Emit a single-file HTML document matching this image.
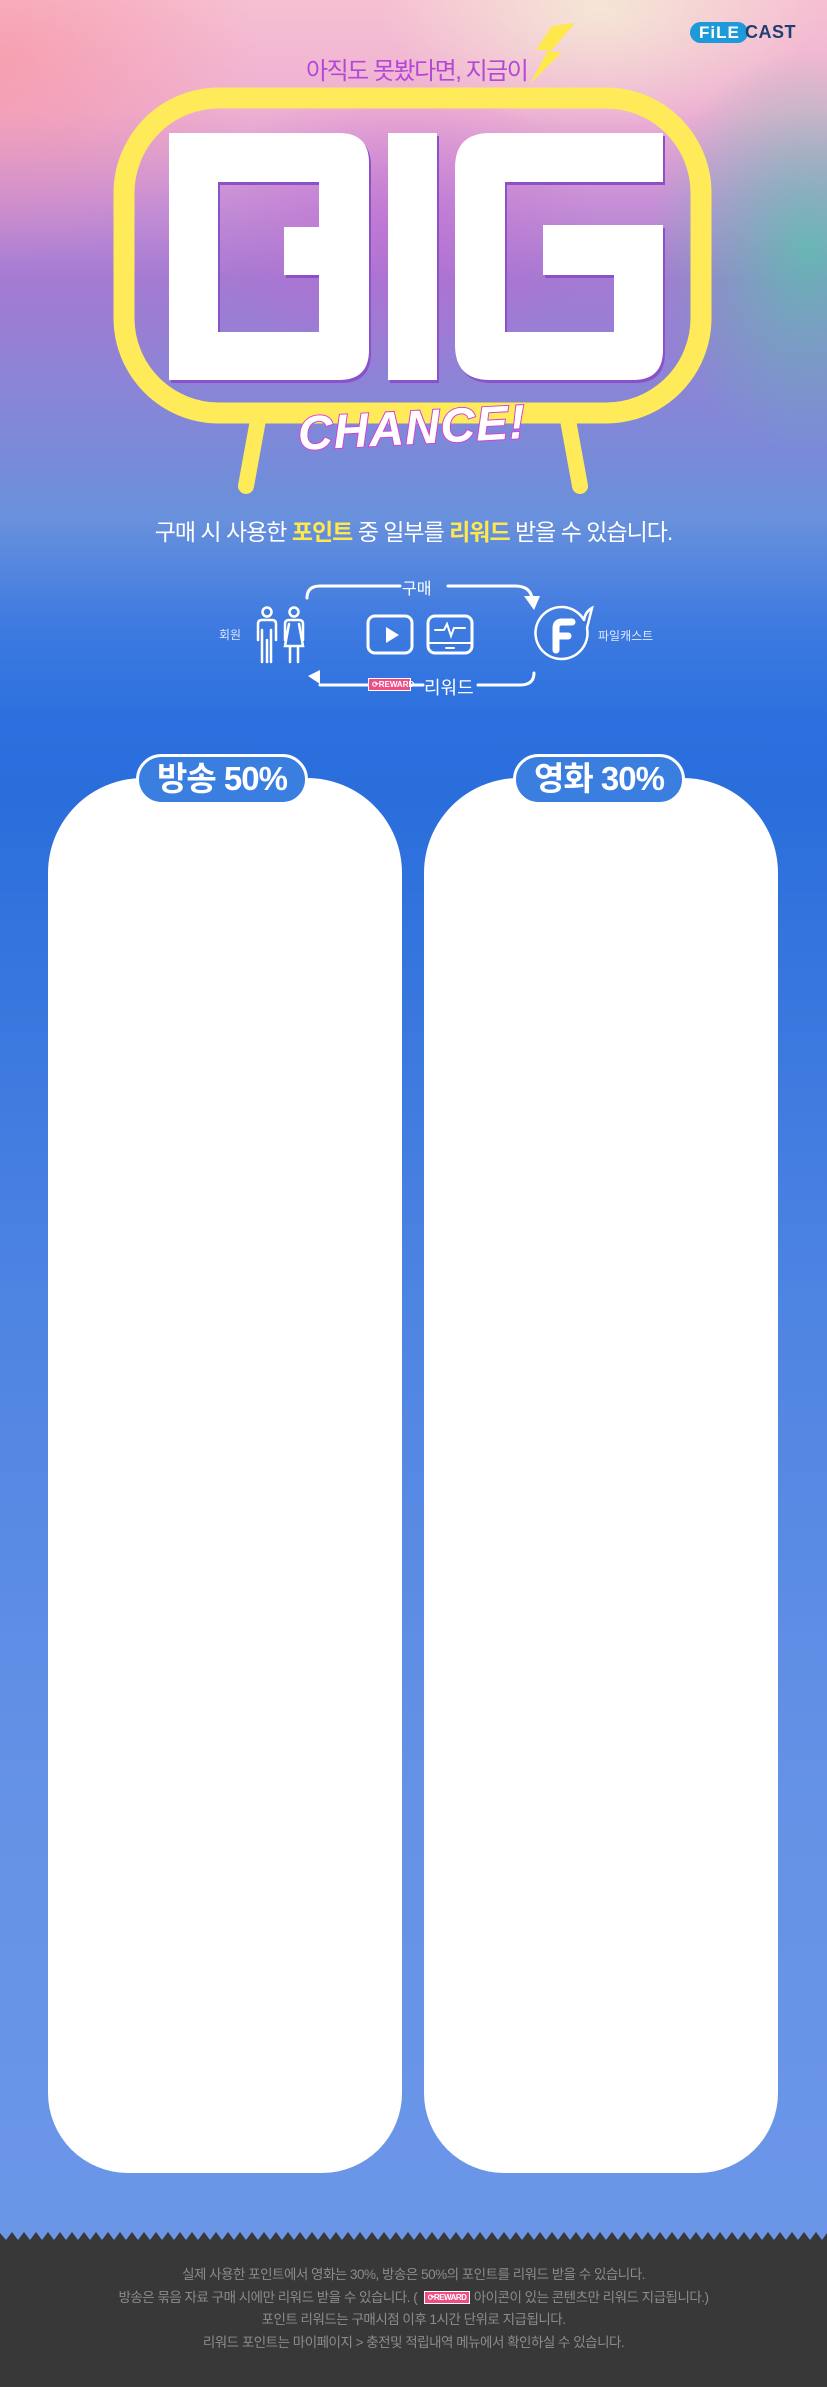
<!DOCTYPE html>
<html><head><meta charset="utf-8">
<style>
*{margin:0;padding:0;box-sizing:border-box}
body{width:827px;height:2390px;position:relative;overflow:hidden;font-family:"Liberation Sans","Noto Sans CJK KR",sans-serif;background:#fff}
#bg{position:absolute;left:0;top:0;width:827px;height:2240px;
background:
radial-gradient(ellipse 160px 200px at 810px 250px,rgba(80,200,170,.75),rgba(80,200,170,0)),
radial-gradient(ellipse 260px 200px at 0px 60px,rgba(250,140,150,.55),rgba(250,140,150,0)),
radial-gradient(ellipse 220px 120px at 600px 10px,rgba(245,240,215,.8),rgba(245,240,215,0)),
radial-gradient(ellipse 200px 150px at 400px 230px,rgba(190,100,210,.5),rgba(190,100,210,0)),
linear-gradient(180deg,#f6c0d2 0px,#eeb0d2 110px,#c890d6 200px,#a47ad2 280px,#8c84d6 380px,#7a8ad8 450px,#6890dc 520px,#3f7be0 620px,#2b70de 720px,#2a6edc 800px,#4e84e2 1300px,#6592e6 1800px,#6b96e8 2240px);}
.abs{position:absolute}
#foot{position:absolute;left:0;top:2240px;width:827px;height:147px;background:#383838;color:#8c8c8c;font-size:13.5px;text-align:center;padding-top:24px;line-height:22.5px;letter-spacing:-0.5px}
.card{position:absolute;top:778px;width:354px;height:1395px;background:#fff;border-radius:95px 95px 80px 80px}
.pill{position:absolute;top:754px;width:172px;height:51px;background:#3a7ee0;border:3px solid #fff;border-radius:26px;color:#fff;font-weight:bold;font-size:33px;text-align:center;line-height:44px;letter-spacing:-1px}
.rw{display:inline-block;background:#ee4d86;border:1px solid #fff;color:#fff;font-size:8px;font-weight:bold;line-height:11px;padding:0 3px;vertical-align:middle}
</style></head><body>
<div id="bg"></div>

<div class="abs" style="left:690px;top:22px;width:58px;height:21px;background:#1f9ad8;border-radius:11px;color:#fff;font-weight:bold;font-size:17px;line-height:21px;padding-left:9px;letter-spacing:1px">FiLE</div>
<div class="abs" style="left:745px;top:21px;color:#1e3f73;font-weight:bold;font-size:18px;line-height:22px;letter-spacing:.5px">CAST</div>

<div class="abs" style="left:306px;top:51px;color:#b446d8;font-size:24px;letter-spacing:-1.5px;white-space:nowrap">아직도 못봤다면, 지금이</div>
<svg class="abs" style="left:0;top:0" width="827" height="500">
<polygon points="575,23 550,52 562,52 530,84 548,50 536,50 552,26" fill="#ffe84c"/>
<line x1="258" y1="420" x2="246" y2="486" stroke="#ffea5a" stroke-width="16" stroke-linecap="round"/>
<line x1="568" y1="420" x2="580" y2="486" stroke="#ffea5a" stroke-width="16" stroke-linecap="round"/>
<rect x="124" y="98" width="577" height="315" rx="95" fill="none" stroke="#ffea5a" stroke-width="21"/>
<g fill="#fff" fill-rule="evenodd" style="filter:drop-shadow(2px 3px 0 #8a52c8)">
<path d="M169,133 H339 Q369,133 369,163 V350 Q369,380 339,380 H169 Z M218,182 H319 V227 H284 V275 H319 V332 H218 Z"/>
<rect x="388" y="133" width="49" height="247"/>
<path d="M490,133 H663 V350 Q663,380 633,380 H490 Q455,380 455,345 V168 Q455,133 490,133 Z M505,182 H663 V225 H543 V275 H614 V332 H505 Z"/>
</g>
<text x="412" y="444" text-anchor="middle" font-family="Liberation Sans" font-weight="bold" font-style="italic" font-size="48" fill="#fff" stroke="#d63fd6" stroke-width="2" paint-order="stroke" transform="rotate(-3 412 430)" letter-spacing="1">CHANCE!</text>
</svg>

<div class="abs" style="left:0;width:827px;top:513px;text-align:center;color:#fff;font-size:23px;letter-spacing:-1px">구매 시 사용한 <b style="color:#ffe84c">포인트</b> 중 일부를 <b style="color:#ffe84c">리워드</b> 받을 수 있습니다.</div>

<svg class="abs" style="left:0;top:560px" width="827" height="150" fill="none" stroke="#fff" stroke-width="3" stroke-linecap="round">
<path d="M307,38 V38 Q307,26 320,26 H400 M448,26 H515 Q530,26 532,38"/>
<polygon points="524,36 540,36 534,50" fill="#fff" stroke="none"/>
<path d="M534,113 Q534,125 520,125 H478 M423,125 H412 M368,125 H320"/>
<polygon points="308,116 320,110 320,124" fill="#fff" stroke="none"/>
<circle cx="267" cy="52" r="4.5" stroke-width="2.5"/>
<circle cx="294" cy="52" r="4.5" stroke-width="2.5"/>
<path d="M258,80 V64 Q258,60 262,60 H272 Q276,60 276,64 V80 M262,70 V102 M271,70 V102 M267,80 V102" stroke-width="2.5"/>
<path d="M285,80 V64 Q285,60 289,60 H299 Q303,60 303,64 V80 M289,64 L285,86 H303 L299,64 M290,86 V102 M298,86 V102" stroke-width="2.5"/>
<rect x="368" y="56" width="44" height="37" rx="7"/>
<polygon points="386,67 386,83 399,75" fill="#fff" stroke="none"/>
<rect x="428" y="56" width="44" height="37" rx="7"/>
<path d="M429,83 H471 M446,88 H454 M435,70 H444 L447,64 L451,76 L454,68 H465" stroke-width="2"/>
<path d="M584,60 A26,26 0 1 0 587,68 M584,60 Q585,52 592,48 Q590,56 587,68" stroke-width="2.5"/>
<path d="M556,90 V68 Q556,62 562,62 H572 M556,76 H568" stroke-width="7"/>
</svg>
<div class="abs" style="left:219px;top:626px;color:#e0e8ff;font-size:12px">회원</div>
<div class="abs" style="left:598px;top:627px;color:#e0e8ff;font-size:12px">파일캐스트</div>
<div class="abs" style="left:402px;top:575px;color:#fff;font-size:16px">구매</div>
<div class="abs" style="left:368px;top:678px;width:43px;height:12px"><span class="rw" style="width:43px;display:block">⟳REWARD</span></div>
<div class="abs" style="left:424px;top:674px;color:#fff;font-size:18px">리워드</div>

<div class="card" style="left:48px"></div>
<div class="card" style="left:424px"></div>
<div class="pill" style="left:136px">방송 50%</div>
<div class="pill" style="left:513px">영화 30%</div>

<svg class="abs" style="left:0;top:2231px" width="827" height="10"><polygon fill="#383838" points="0,10 0,2 6,9 12,1 18,9 24,1 30,9 36,1 42,9 48,1 54,9 60,1 66,9 72,1 78,9 84,1 90,9 96,1 102,9 108,1 114,9 120,1 126,9 132,1 138,9 144,1 150,9 156,1 162,9 168,1 174,9 180,1 186,9 192,1 198,9 204,1 210,9 216,1 222,9 228,1 234,9 240,1 246,9 252,1 258,9 264,1 270,9 276,1 282,9 288,1 294,9 300,1 306,9 312,1 318,9 324,1 330,9 336,1 342,9 348,1 354,9 360,1 366,9 372,1 378,9 384,1 390,9 396,1 402,9 408,1 414,9 420,1 426,9 432,1 438,9 444,1 450,9 456,1 462,9 468,1 474,9 480,1 486,9 492,1 498,9 504,1 510,9 516,1 522,9 528,1 534,9 540,1 546,9 552,1 558,9 564,1 570,9 576,1 582,9 588,1 594,9 600,1 606,9 612,1 618,9 624,1 630,9 636,1 642,9 648,1 654,9 660,1 666,9 672,1 678,9 684,1 690,9 696,1 702,9 708,1 714,9 720,1 726,9 732,1 738,9 744,1 750,9 756,1 762,9 768,1 774,9 780,1 786,9 792,1 798,9 804,1 810,9 816,1 822,9 827,2 827,10"/></svg>

<div id="foot">
실제 사용한 포인트에서 영화는 30%, 방송은 50%의 포인트를 리워드 받을 수 있습니다.<br>
방송은 묶음 자료 구매 시에만 리워드 받을 수 있습니다. ( &nbsp;<span class="rw">⟳REWARD</span> 아이콘이 있는 콘텐츠만 리워드 지급됩니다.)<br>
포인트 리워드는 구매시점 이후 1시간 단위로 지급됩니다.<br>
리워드 포인트는 마이페이지 &gt; 충전및 적립내역 메뉴에서 확인하실 수 있습니다.
</div>
</body></html>
